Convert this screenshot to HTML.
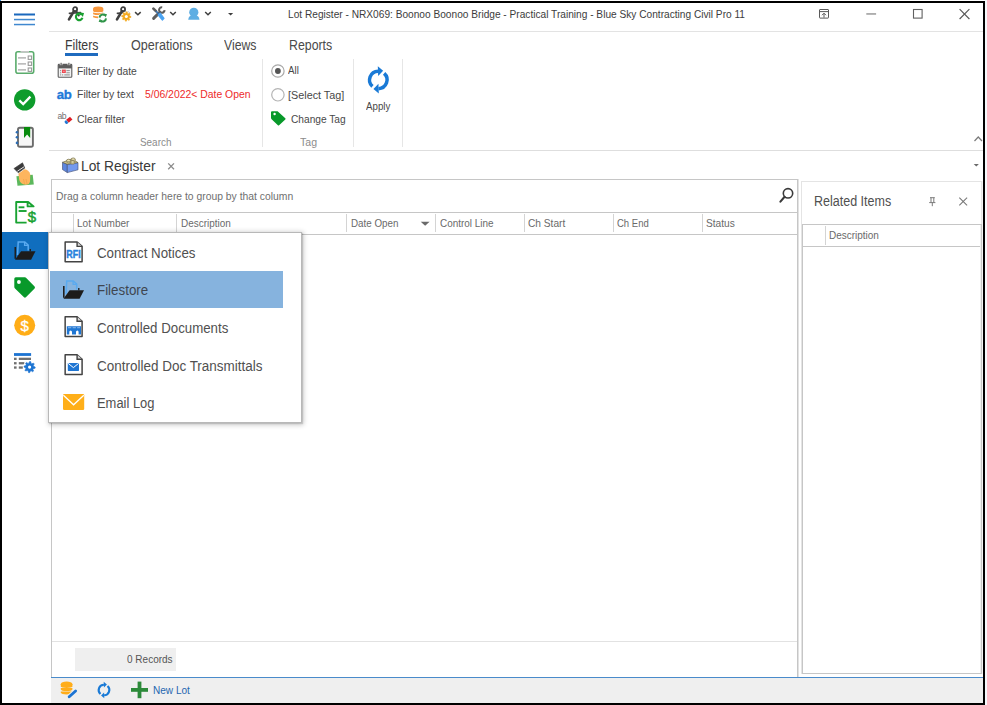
<!DOCTYPE html>
<html><head><meta charset="utf-8"><style>
html,body{margin:0;padding:0;width:987px;height:705px;overflow:hidden;background:#fff}
.r{position:absolute}
.t{position:absolute;font-family:"Liberation Sans",sans-serif;line-height:1;white-space:pre}
.i{position:absolute;overflow:visible}
</style></head><body>
<div class="r" style="left:0px;top:0px;width:987px;height:705px;background:#fff;"></div>
<div class="r" style="left:985px;top:0px;width:2px;height:705px;background:#f6f9fc;"></div>
<div class="r" style="left:0px;top:1px;width:985px;height:2px;background:#000;"></div>
<div class="r" style="left:0px;top:1px;width:2px;height:704px;background:#000;"></div>
<div class="r" style="left:983px;top:1px;width:2px;height:704px;background:#000;"></div>
<div class="r" style="left:0px;top:703px;width:985px;height:2px;background:#000;"></div>
<div class="r" style="left:0px;top:0px;width:1px;height:1px;background:#3a8fdc;"></div>
<div class="r" style="left:49px;top:31px;width:934px;height:1px;background:#e3e3e3;"></div>
<div class="r" style="left:49px;top:150px;width:934px;height:1px;background:#dedede;"></div>
<div class="r" style="left:262px;top:59px;width:1px;height:88px;background:#e6e6e6;"></div>
<div class="r" style="left:353px;top:59px;width:1px;height:88px;background:#e6e6e6;"></div>
<div class="r" style="left:402px;top:59px;width:1px;height:88px;background:#e6e6e6;"></div>
<div class="t" style="left:288.40px;top:9.00px;font-size:11px;transform:scaleX(0.9220);transform-origin:0.00px 0;color:#3c3c3c;">Lot Register - NRX069: Boonoo Boonoo Bridge - Practical Training - Blue Sky Contracting Civil Pro 11</div>
<div class="t" style="left:64.60px;top:38.00px;font-size:14px;transform:scaleX(0.8765);transform-origin:0.00px 0;color:#3a3a3a;">Filters</div>
<div class="r" style="left:65px;top:53px;width:33px;height:3px;background:#1f6bbf;"></div>
<div class="t" style="left:130.50px;top:38.00px;font-size:14px;transform:scaleX(0.8980);transform-origin:0.00px 0;color:#4a4a4a;">Operations</div>
<div class="t" style="left:224.20px;top:38.00px;font-size:14px;transform:scaleX(0.8763);transform-origin:0.00px 0;color:#4a4a4a;">Views</div>
<div class="t" style="left:288.60px;top:38.00px;font-size:14px;transform:scaleX(0.8814);transform-origin:0.00px 0;color:#4a4a4a;">Reports</div>
<div class="t" style="left:76.70px;top:66.00px;font-size:11px;transform:scaleX(0.9405);transform-origin:0.00px 0;color:#484848;">Filter by date</div>
<div class="t" style="left:76.70px;top:89.00px;font-size:11px;transform:scaleX(0.9498);transform-origin:0.00px 0;color:#484848;">Filter by text</div>
<div class="t" style="left:144.70px;top:89.00px;font-size:11px;transform:scaleX(0.9452);transform-origin:0.00px 0;color:#ee2a2a;">5/06/2022&lt; Date Open</div>
<div class="t" style="left:76.70px;top:114.00px;font-size:11px;transform:scaleX(0.9576);transform-origin:0.00px 0;color:#484848;">Clear filter</div>
<div class="t" style="left:139.60px;top:137.00px;font-size:11px;transform:scaleX(0.9011);transform-origin:0.00px 0;color:#8c8c8c;">Search</div>
<div class="t" style="left:288.20px;top:65.00px;font-size:11px;transform:scaleX(0.8837);transform-origin:0.00px 0;color:#484848;">All</div>
<div class="t" style="left:288.20px;top:90.00px;font-size:11px;transform:scaleX(0.9829);transform-origin:0.00px 0;color:#484848;">[Select Tag]</div>
<div class="t" style="left:290.70px;top:114.00px;font-size:11px;transform:scaleX(0.9235);transform-origin:0.00px 0;color:#484848;">Change Tag</div>
<div class="t" style="left:299.60px;top:137.00px;font-size:11px;transform:scaleX(0.9587);transform-origin:0.00px 0;color:#8c8c8c;">Tag</div>
<div class="t" style="left:365.70px;top:101.00px;font-size:11px;transform:scaleX(0.8833);transform-origin:0.00px 0;color:#484848;">Apply</div>
<div class="t" style="left:81.10px;top:159.00px;font-size:14px;transform:scaleX(0.9869);transform-origin:0.00px 0;color:#3a3a3a;">Lot Register</div>
<div class="r" style="left:51px;top:179px;width:747px;height:498px;background:#fff;border:1px solid #c6c6c6;box-sizing:border-box;border-bottom:none"></div>
<div class="r" style="left:52px;top:212px;width:745px;height:1px;background:#c6c6c6;"></div>
<div class="r" style="left:52px;top:234px;width:745px;height:1px;background:#c6c6c6;"></div>
<div class="r" style="left:798px;top:179px;width:1px;height:498px;background:#e2e2e2;"></div>
<div class="r" style="left:73px;top:214px;width:1px;height:18px;background:#d4d4d4;"></div>
<div class="r" style="left:176px;top:214px;width:1px;height:18px;background:#d4d4d4;"></div>
<div class="r" style="left:346px;top:214px;width:1px;height:18px;background:#d4d4d4;"></div>
<div class="r" style="left:435px;top:214px;width:1px;height:18px;background:#d4d4d4;"></div>
<div class="r" style="left:524px;top:214px;width:1px;height:18px;background:#d4d4d4;"></div>
<div class="r" style="left:613px;top:214px;width:1px;height:18px;background:#d4d4d4;"></div>
<div class="r" style="left:702px;top:214px;width:1px;height:18px;background:#d4d4d4;"></div>
<div class="t" style="left:56.40px;top:191.00px;font-size:11px;transform:scaleX(0.9416);transform-origin:0.00px 0;color:#6f6f6f;">Drag a column header here to group by that column</div>
<div class="t" style="left:77.40px;top:218.00px;font-size:11px;transform:scaleX(0.9117);transform-origin:0.00px 0;color:#6a6a6a;">Lot Number</div>
<div class="t" style="left:180.50px;top:218.00px;font-size:11px;transform:scaleX(0.9033);transform-origin:0.00px 0;color:#6a6a6a;">Description</div>
<div class="t" style="left:350.60px;top:218.00px;font-size:11px;transform:scaleX(0.8910);transform-origin:0.00px 0;color:#6a6a6a;">Date Open</div>
<div class="t" style="left:439.60px;top:218.00px;font-size:11px;transform:scaleX(0.9020);transform-origin:0.00px 0;color:#6a6a6a;">Control Line</div>
<div class="t" style="left:528.20px;top:218.00px;font-size:11px;transform:scaleX(0.9245);transform-origin:0.00px 0;color:#6a6a6a;">Ch Start</div>
<div class="t" style="left:617.00px;top:218.00px;font-size:11px;transform:scaleX(0.8641);transform-origin:0.00px 0;color:#6a6a6a;">Ch End</div>
<div class="t" style="left:705.70px;top:218.00px;font-size:11px;transform:scaleX(0.9235);transform-origin:0.00px 0;color:#6a6a6a;">Status</div>
<div class="r" style="left:52px;top:641px;width:745px;height:1px;background:#e2e2e2;"></div>
<div class="r" style="left:75px;top:648px;width:101px;height:23px;background:#efefef;"></div>
<div class="t" style="left:127.40px;top:654.00px;font-size:11px;transform:scaleX(0.9095);transform-origin:0.00px 0;color:#555;">0 Records</div>
<div class="r" style="left:801px;top:181px;width:181px;height:493px;background:#fff;border:1px solid #e4e4e4;box-sizing:border-box"></div>
<div class="t" style="left:813.60px;top:194.00px;font-size:14px;transform:scaleX(0.8939);transform-origin:0.00px 0;color:#505050;">Related Items</div>
<div class="r" style="left:802px;top:224px;width:180px;height:450px;background:#fff;border:1px solid #c6c6c6;box-sizing:border-box"></div>
<div class="r" style="left:803px;top:246px;width:178px;height:1px;background:#c6c6c6;"></div>
<div class="r" style="left:980px;top:225px;width:1px;height:448px;background:#efefef;"></div>
<div class="r" style="left:982px;top:181px;width:1px;height:493px;background:#f3f3f3;"></div>
<div class="r" style="left:825px;top:226px;width:1px;height:19px;background:#d4d4d4;"></div>
<div class="t" style="left:828.90px;top:230.00px;font-size:11px;transform:scaleX(0.9069);transform-origin:0.00px 0;color:#6a6a6a;">Description</div>
<div class="r" style="left:51px;top:677px;width:932px;height:1px;background:#4a8bcb;"></div>
<div class="r" style="left:51px;top:678px;width:932px;height:25px;background:#efefef;"></div>
<div class="t" style="left:152.90px;top:685.00px;font-size:11px;transform:scaleX(0.9145);transform-origin:0.00px 0;color:#2566b0;">New Lot</div>
<div class="r" style="left:2px;top:232px;width:46px;height:37px;background:#106ebe;"></div>
<svg class="i" style="left:0;top:0" width="987" height="705" viewBox="0 0 987 705"><rect x="14" y="13.5" width="21" height="2" fill="#1a68bd"/><rect x="14" y="18.8" width="21" height="1.5" fill="#3f88cf"/><rect x="14" y="23.8" width="21" height="1.5" fill="#3f88cf"/><g stroke="#404040" fill="none" stroke-linecap="round"><circle cx="75.1" cy="9.2" r="2.0" stroke-width="1.8"/><line x1="73.8" y1="11.4" x2="69.0" y2="19.4" stroke-width="2.6"/><line x1="69.4" y1="13.3" x2="80.5" y2="12.5" stroke-width="1.7"/><line x1="76.4" y1="11.4" x2="78.8" y2="15.4" stroke-width="2"/></g><path d="M81.9 14.9 A3.3 3.3 0 1 0 82.4 17.8" fill="none" stroke="#19a030" stroke-width="2.2"/><polygon points="79.4,12.4 84,12.9 82.9,16.9" fill="#19a030"/><g fill="#f7973d"><ellipse cx="98.2" cy="8.8" rx="5.1" ry="2.4"/><rect x="93.1" y="8.8" width="10.2" height="2.2"/><ellipse cx="98.2" cy="11" rx="5.1" ry="1.2"/><path d="M93.1 12.6 Q98.2 14 103.3 12.6 V14.2 Q98.2 16 93.1 14.2 Z"/><path d="M93.1 15.8 Q98.2 17.3 103.3 15.8 V17.2 Q98.2 19.2 93.1 17.2 Z"/></g><circle cx="102.8" cy="18" r="4.8" fill="#fff"/><g fill="none" stroke="#2f9448" stroke-width="2"><path d="M99.6 17.6 A3.2 3.2 0 0 1 105 15.4"/><path d="M106 18.4 A3.2 3.2 0 0 1 100.6 20.6"/></g><polygon points="103.6,13.4 107,14.2 105.6,17.6" fill="#2f9448"/><polygon points="102,22.6 98.6,21.8 100,18.4" fill="#2f9448"/><g stroke="#404040" fill="none" stroke-linecap="round"><circle cx="123.1" cy="9.2" r="2.0" stroke-width="1.8"/><line x1="121.8" y1="11.4" x2="117.0" y2="19.4" stroke-width="2.6"/><line x1="117.4" y1="13.3" x2="128.5" y2="12.5" stroke-width="1.7"/><line x1="124.4" y1="11.4" x2="126.8" y2="15.4" stroke-width="2"/></g><circle cx="126.3" cy="16.5" r="4.9" fill="#fff"/><polygon points="126.30,11.80 127.22,11.89 127.56,13.45 128.13,13.76 129.62,13.18 130.21,13.89 129.35,15.24 129.54,15.86 131.00,16.50 130.91,17.42 129.35,17.76 129.04,18.33 129.62,19.82 128.91,20.41 127.56,19.55 126.94,19.74 126.30,21.20 125.38,21.11 125.04,19.55 124.47,19.24 122.98,19.82 122.39,19.11 123.25,17.76 123.06,17.14 121.60,16.50 121.69,15.58 123.25,15.24 123.56,14.67 122.98,13.18 123.69,12.59 125.04,13.45 125.66,13.26" fill="#f3a91f" stroke="#f3a91f" stroke-width="0.6" stroke-linejoin="round"/><circle cx="126.3" cy="16.5" r="1.5" fill="#fff"/><polyline points="135.1,12.1 137.9,14.8 140.7,12.1" fill="none" stroke="#3e3e3e" stroke-width="1.5"/><g stroke-linecap="round" fill="none"><line x1="153.6" y1="18.4" x2="158.6" y2="13.4" stroke="#5e5e5e" stroke-width="2.9"/><path d="M164.6 10.2 A2.75 2.75 0 1 1 162.2 7.2" stroke="#5e5e5e" stroke-width="2.1" stroke-linecap="butt"/><line x1="158.6" y1="13.4" x2="160" y2="12" stroke="#5e5e5e" stroke-width="2.1"/><line x1="153.4" y1="8.6" x2="156.2" y2="11.4" stroke="#5e5e5e" stroke-width="2.7"/><line x1="156.2" y1="11.4" x2="158.8" y2="14" stroke="#2f6fb5" stroke-width="1.3"/></g><polygon points="158.2,15.2 160.2,13.2 164,18.4 162.4,20 " fill="#4aa3f2" stroke="#4aa3f2" stroke-width="1.2" stroke-linejoin="round"/><polyline points="170.2,12 173.0,14.7 175.79999999999998,12" fill="none" stroke="#3e3e3e" stroke-width="1.5"/><g fill="#5eaee3"><circle cx="193.8" cy="12.3" r="4.6"/><path d="M188.2 19.7 Q188.8 15.6 192 15.6 H195.7 Q198.9 15.6 199.5 19.7 Z"/></g><polyline points="205.2,12 208.0,14.7 210.79999999999998,12" fill="none" stroke="#3e3e3e" stroke-width="1.5"/><polygon points="228,12.9 233.2,12.9 230.6,15.5" fill="#3e3e3e"/><g fill="none" stroke="#5a5a5a" stroke-width="1"><rect x="819.5" y="9.5" width="9" height="8.6" rx="0.5"/><line x1="819.5" y1="11.6" x2="828.5" y2="11.6"/><line x1="824" y1="13.4" x2="824" y2="17.6"/><polyline points="822,15.2 824,13.2 826,15.2"/></g><rect x="866.3" y="13.3" width="9.8" height="1.3" fill="#8a8a8a"/><rect x="913.5" y="9.5" width="8.6" height="8.6" fill="none" stroke="#606060" stroke-width="1.1"/><g stroke="#555" stroke-width="1.1"><line x1="959.6" y1="9.2" x2="969.4" y2="19"/><line x1="969.4" y1="9.2" x2="959.6" y2="19"/></g><polyline points="974.5,141 978.25,137 982.0,141" fill="none" stroke="#7a7a7a" stroke-width="1.2"/><polygon points="973.7,164 978.9,164 976.3,166.6" fill="#6a6a6a"/><rect x="15.9" y="51.8" width="17.8" height="21.4" rx="2" fill="#fff" stroke="#5aac6c" stroke-width="1.6"/><rect x="20.5" y="51" width="8.5" height="1.6" fill="#c4c4c4"/><g fill="#bdbdbd"><rect x="18" y="57" width="8" height="1.7"/><rect x="18" y="63" width="8" height="1.7"/><rect x="18" y="69" width="8" height="1.7"/></g><g fill="none" stroke="#9a9a9a" stroke-width="1.1"><rect x="28.2" y="56" width="3.4" height="3.4"/><rect x="28.2" y="62" width="3.4" height="3.4"/><rect x="28.2" y="68" width="3.4" height="3.4"/></g><circle cx="24.7" cy="99.9" r="10.7" fill="#0e9c2c"/><polyline points="19.3,100.4 23.2,104.1 30.4,96.6" fill="none" stroke="#fff" stroke-width="2.3"/><rect x="18" y="127.8" width="14.9" height="19" rx="1.8" fill="#f6f6f6" stroke="#6c6c6c" stroke-width="1.9"/><polygon points="24,126.9 30.2,126.9 30.2,138 27.1,134.4 24,138" fill="#078a0c"/><g fill="#2e6db3"><circle cx="17" cy="132.2" r="1.3"/><circle cx="17" cy="137.3" r="1.3"/><circle cx="17" cy="142.9" r="1.3"/></g><polygon points="16.4,176.3 32.7,174.8 33.8,184.6 17.5,185.7" fill="#5cb85c"/><path d="M18.4 173.8 L24.6 169.2 Q28.8 169.6 30.3 174.4 L30 181.5 Q29.2 184.9 25.6 184.7 Q20.4 184.1 19.3 180 Z" fill="#fdb55e"/><g fill="none" stroke="#e99a3c" stroke-width="0.5"><line x1="23.5" y1="179" x2="24.5" y2="184"/><line x1="26" y1="179" x2="27" y2="184"/></g><polygon points="14.0,168.5 22.5,162.8 24.8,168.1 18.3,172.8" fill="#3b3b3b" stroke="#3b3b3b" stroke-width="0.6" stroke-linejoin="round"/><line x1="17.4" y1="171.2" x2="24" y2="166.8" stroke="#e8e8e8" stroke-width="1"/><g fill="none" stroke="#19a332" stroke-width="1.9" stroke-linejoin="round"><path d="M26.6 222.6 H16.2 V202 H28.2 L33.6 206.4 H27.6 V202.4"/><line x1="18.6" y1="207.3" x2="24.4" y2="207.3"/><line x1="18.6" y1="211" x2="26.6" y2="211"/></g><text x="32" y="222.3" font-family="Liberation Sans" font-size="15" fill="#19a332" stroke="#19a332" stroke-width="0.5" text-anchor="middle">$</text><path d="M15.3 258.8 V247" stroke="#1f1f1f" stroke-width="1.6" fill="none"/><path d="M17.6 255 L18.2 242 H24.8 L28.2 245 V250.5" stroke="#5aaaf0" stroke-width="1.5" fill="none"/><path d="M24.6 242 V245.3 H28" stroke="#5aaaf0" stroke-width="1.3" fill="none"/><rect x="29.6" y="249" width="1.4" height="2.4" fill="#1f1f1f"/><polygon points="21.1,251.2 35.5,251.2 31.1,259.7 15,259.7" fill="#1c1c1c"/><path d="M15.8 277.3 H25 Q25.6 277.3 26 277.7 L34.6 286.6 Q35.4 287.6 34.6 288.6 L25.9 297.3 Q24.9 298.2 24 297.3 L15 288.4 Q14.3 287.8 14.3 286.8 V278.8 Q14.3 277.3 15.8 277.3 Z" fill="#08992a"/><circle cx="18.9" cy="282" r="1.9" fill="#fff"/><circle cx="24.7" cy="325.3" r="10.5" fill="#ffad17"/><text x="24.7" y="331" font-family="Liberation Sans" font-size="15" fill="#fff" stroke="#fff" stroke-width="0.3" text-anchor="middle">$</text><rect x="14" y="353.1" width="17.1" height="2.8" fill="#1d74d2"/><g fill="#707070"><rect x="14" y="357.7" width="2.6" height="2.3"/><rect x="14" y="362.1" width="2.6" height="2.3"/><rect x="14" y="366.4" width="2.6" height="2.3"/><rect x="18.8" y="357.7" width="12.2" height="2.3"/><rect x="18.8" y="362.1" width="5.6" height="2.3"/><rect x="18.8" y="366.4" width="4" height="2.3"/></g><circle cx="29.6" cy="367.1" r="6.4" fill="#fff"/><polygon points="29.60,361.50 30.69,361.61 31.13,363.40 31.82,363.77 33.56,363.14 34.26,363.99 33.30,365.57 33.52,366.32 35.20,367.10 35.09,368.19 33.30,368.63 32.93,369.32 33.56,371.06 32.71,371.76 31.13,370.80 30.38,371.02 29.60,372.70 28.51,372.59 28.07,370.80 27.38,370.43 25.64,371.06 24.94,370.21 25.90,368.63 25.68,367.88 24.00,367.10 24.11,366.01 25.90,365.57 26.27,364.88 25.64,363.14 26.49,362.44 28.07,363.40 28.82,363.18" fill="#1d74d2" stroke="#1d74d2" stroke-width="0.6" stroke-linejoin="round"/><circle cx="29.6" cy="367.1" r="1.6" fill="#fff"/><rect x="58.2" y="64.4" width="13.6" height="12.8" rx="0.8" fill="#f2f2f2" stroke="#5c5c5c" stroke-width="1.1"/><rect x="58.2" y="64.4" width="13.6" height="4" fill="#5c5c5c"/><g fill="#fff"><rect x="59.8" y="63" width="2.6" height="2.2"/><rect x="67.6" y="63" width="2.6" height="2.2"/></g><g fill="#5c5c5c"><rect x="60.5" y="62.8" width="1.2" height="3"/><rect x="68.3" y="62.8" width="1.2" height="3"/></g><rect x="62" y="69.6" width="3.8" height="3.4" fill="#ee4a52"/><rect x="63.4" y="70.9" width="1" height="0.9" fill="#fbd0d2"/><g fill="#9a9a9a"><rect x="60" y="70" width="1.2" height="1.2"/><rect x="60" y="72.2" width="1.2" height="1.2"/><rect x="60" y="74.3" width="1.2" height="1.2"/><rect x="62" y="74.3" width="1.2" height="1.2"/><rect x="64.3" y="74.3" width="5.5" height="1.2"/><rect x="66.4" y="70" width="3.4" height="1.1"/><rect x="66.4" y="72.2" width="3.4" height="1.1"/></g><text x="56.8" y="99" font-family="Liberation Sans" font-weight="bold" font-size="13.2" fill="#1f7ad9" stroke="#1f7ad9" stroke-width="0.35" letter-spacing="-0.3">ab</text><text x="57.4" y="118.7" font-family="Liberation Sans" font-size="8.6" fill="#707070" letter-spacing="-0.3">ab</text><g transform="rotate(-40 68.6 120.3)"><rect x="67" y="118.4" width="5" height="3.8" fill="#dd1f26"/><rect x="64.2" y="118.4" width="2.8" height="3.8" rx="1.4" fill="#2479d4"/></g><circle cx="277.9" cy="71" r="6.2" fill="#fff" stroke="#a9a9a9" stroke-width="1.2"/><circle cx="277.9" cy="71" r="2.9" fill="#555"/><circle cx="277.9" cy="94.8" r="6.2" fill="#fff" stroke="#b4b4b4" stroke-width="1.2"/><path d="M272 111.2 H277.6 L285.3 118.2 Q285.9 118.8 285.3 119.4 L279.1 125.2 Q278.5 125.8 277.9 125.2 L271.6 119.2 Q271 118.6 271 118 V112.2 Q271 111.2 272 111.2 Z" fill="#08992a"/><circle cx="274.6" cy="114" r="1.2" fill="#fff"/><path d="M372.45 86.40 A8.75 8.75 0 0 1 378.15 71.15" fill="none" stroke="#1a7ad6" stroke-width="3.5"/><polygon points="383.14,70.81 377.82,66.26 378.17,76.05" fill="#1a7ad6"/><path d="M384.15 73.40 A8.75 8.75 0 0 1 378.45 88.65" fill="none" stroke="#1a7ad6" stroke-width="3.5"/><polygon points="373.46,88.99 378.78,93.54 378.43,83.75" fill="#1a7ad6"/><polygon points="62.5,162.3 67.3,164.3 67.3,172.6 62.5,169.6" fill="#5d86de" stroke="#3d4a6e" stroke-width="0.6" stroke-linejoin="round"/><polygon points="67.3,164.3 78,162.6 78,169.8 67.3,172.6" fill="#7399ee" stroke="#3d4a6e" stroke-width="0.6" stroke-linejoin="round"/><polygon points="62.5,162.3 72,158.8 78,162.6 67.3,164.3" fill="#cdc38a" stroke="#5a5640" stroke-width="0.6" stroke-linejoin="round"/><g stroke="#6a6448" stroke-width="0.5"><path d="M66.6 161.8 v-1.4 a2 1.1 0 0 1 4 0 v1.4 a2 1.1 0 0 1 -4 0z" fill="#d8ce94"/><ellipse cx="68.6" cy="160.4" rx="2" ry="1.1" fill="#efe6b4"/><path d="M71.2 160.6 v-1.4 a2 1.1 0 0 1 4 0 v1.4 a2 1.1 0 0 1 -4 0z" fill="#d8ce94"/><ellipse cx="73.2" cy="159.2" rx="2" ry="1.1" fill="#efe6b4"/><path d="M70.6 163.2 v-1.2 a2 1.1 0 0 1 4 0 v1.2 a2 1.1 0 0 1 -4 0z" fill="#d8ce94"/><ellipse cx="72.6" cy="162" rx="2" ry="1.1" fill="#efe6b4"/></g><g stroke="#8a8a8a" stroke-width="1.3"><line x1="168.2" y1="163.4" x2="174" y2="169.2"/><line x1="174" y1="163.4" x2="168.2" y2="169.2"/></g><circle cx="788" cy="193.3" r="4.7" fill="none" stroke="#3a3a3a" stroke-width="1.6"/><line x1="784.6" y1="196.8" x2="780.4" y2="201.6" stroke="#3a3a3a" stroke-width="2.1" stroke-linecap="round"/><polygon points="420.7,221.7 429.6,221.7 425.15,225.8" fill="#6a6a6a"/><g fill="none" stroke="#7a7a7a" stroke-width="1"><line x1="930" y1="197.7" x2="934.8" y2="197.7"/><line x1="931" y1="197.7" x2="931" y2="202.4"/><line x1="933.8" y1="197.7" x2="933.8" y2="202.4"/><line x1="929.2" y1="202.6" x2="935.4" y2="202.6"/><line x1="932.3" y1="202.6" x2="932.3" y2="206.2"/></g><g stroke="#777" stroke-width="1.05"><line x1="959.3" y1="197.6" x2="967.1" y2="205.4"/><line x1="967.1" y1="197.6" x2="959.3" y2="205.4"/></g><g fill="#ffad1a"><ellipse cx="66.6" cy="684.2" rx="5.8" ry="2.6"/><rect x="60.8" y="684.2" width="11.6" height="2.4"/><ellipse cx="66.6" cy="686.6" rx="5.8" ry="1.4"/><path d="M60.8 688 h11.6 v1.6 a5.8 1.5 0 0 1 -11.6 0z"/><path d="M60.8 691.4 h11.6 v1.4 a5.8 1.6 0 0 1 -11.6 0z"/></g><line x1="68.6" y1="697.2" x2="75.8" y2="690.8" stroke="#f0f0f0" stroke-width="4.6"/><line x1="69.2" y1="696.8" x2="75.6" y2="691" stroke="#1d74d2" stroke-width="2.9" stroke-linecap="round"/><path d="M100.45 693.94 A5.3 5.3 0 0 1 103.91 684.70" fill="none" stroke="#1a7ad6" stroke-width="2.1"/><polygon points="106.91,684.53 103.71,681.80 103.92,687.60" fill="#1a7ad6"/><path d="M107.55 686.06 A5.3 5.3 0 0 1 104.09 695.30" fill="none" stroke="#1a7ad6" stroke-width="2.1"/><polygon points="101.09,695.47 104.29,698.20 104.08,692.40" fill="#1a7ad6"/><g fill="#2c8a3a"><rect x="137.6" y="681.6" width="3.8" height="16.6"/><rect x="131" y="688" width="17" height="3.8"/></g></svg>
<div class="r" style="left:48px;top:232px;width:254px;height:191px;background:#fff;border:1px solid #b8b8b8;box-sizing:border-box;box-shadow:1px 1px 1px 0 rgba(0,0,0,0.12),0.5px 1px 5px 1px rgba(0,0,0,0.22)"></div>
<div class="r" style="left:50px;top:271px;width:233px;height:37px;background:#86b3de;"></div>
<div class="t" style="left:97.40px;top:246.00px;font-size:14px;transform:scaleX(0.9518);transform-origin:0.00px 0;color:#505050;">Contract Notices</div>
<div class="t" style="left:97.40px;top:283.00px;font-size:14px;transform:scaleX(0.9536);transform-origin:0.00px 0;color:#3f4650;">Filestore</div>
<div class="t" style="left:97.40px;top:321.00px;font-size:14px;transform:scaleX(0.9479);transform-origin:0.00px 0;color:#505050;">Controlled Documents</div>
<div class="t" style="left:97.40px;top:359.00px;font-size:14px;transform:scaleX(0.9625);transform-origin:0.00px 0;color:#505050;">Controlled Doc Transmittals</div>
<div class="t" style="left:97.40px;top:396.00px;font-size:14px;transform:scaleX(0.9236);transform-origin:0.00px 0;color:#505050;">Email Log</div>
<svg class="i" style="left:0;top:0" width="987" height="705" viewBox="0 0 987 705"><path d="M65.15 241.95 H77.10000000000001 L82.10000000000001 246.39999999999998 V261.8 H65.15 Z" fill="#fff" stroke="#434343" stroke-width="1.5" stroke-linejoin="round"/><path d="M77.10000000000001 241.95 V246.39999999999998 H82.10000000000001" fill="#d8d8d8" stroke="#434343" stroke-width="1.4"/><text transform="translate(66.3 258.1) scale(0.84 1)" x="0" y="0" font-family="Liberation Sans" font-weight="bold" font-size="10.6" fill="#2680dc" stroke="#2680dc" stroke-width="0.45">RFI</text><path d="M63.8 297.8 V286" stroke="#1f1f1f" stroke-width="1.6" fill="none"/><path d="M66.1 294 L66.7 281 H73.3 L76.7 284 V289.5" stroke="#5aaaf0" stroke-width="1.5" fill="none"/><path d="M73.1 281 V284.3 H76.5" stroke="#5aaaf0" stroke-width="1.3" fill="none"/><rect x="78.1" y="288" width="1.4" height="2.4" fill="#1f1f1f"/><polygon points="69.6,290.2 84.0,290.2 79.6,298.7 63.5,298.7" fill="#1c1c1c"/><path d="M65.15 316.75 H77.10000000000001 L82.10000000000001 321.2 V336.6 H65.15 Z" fill="#fff" stroke="#434343" stroke-width="1.5" stroke-linejoin="round"/><path d="M77.10000000000001 316.75 V321.2 H82.10000000000001" fill="#d8d8d8" stroke="#434343" stroke-width="1.4"/><path d="M66.8 326.3 H81 V334.5 H78.6 V332 Q78.6 330.4 77.4 330.4 Q76 330.4 76 332 V334.5 H72 V332 Q72 330.4 70.6 330.4 Q69.3 330.4 69.3 332 V334.5 H66.8 Z" fill="#1f76d3"/><g fill="#9cc4ef"><rect x="68" y="327.3" width="3.3" height="0.9"/><rect x="72.6" y="327.3" width="3.3" height="0.9"/><rect x="77.1" y="327.3" width="3.0" height="0.9"/></g><path d="M65.15 354.75 H77.10000000000001 L82.10000000000001 359.2 V374.6 H65.15 Z" fill="#fff" stroke="#434343" stroke-width="1.5" stroke-linejoin="round"/><path d="M77.10000000000001 354.75 V359.2 H82.10000000000001" fill="#d8d8d8" stroke="#434343" stroke-width="1.4"/><rect x="67.8" y="362.9" width="11.2" height="8" rx="0.6" fill="#1f76d3"/><polyline points="68.2,363.4 73.4,367.6 78.6,363.4" fill="none" stroke="#fff" stroke-width="1"/><rect x="63" y="394.1" width="21.2" height="15.9" rx="1.2" fill="#ffaf19"/><polyline points="63.4,395.2 73.6,404.8 83.8,395.2" fill="none" stroke="#fff" stroke-width="1.3"/></svg>
</body></html>
